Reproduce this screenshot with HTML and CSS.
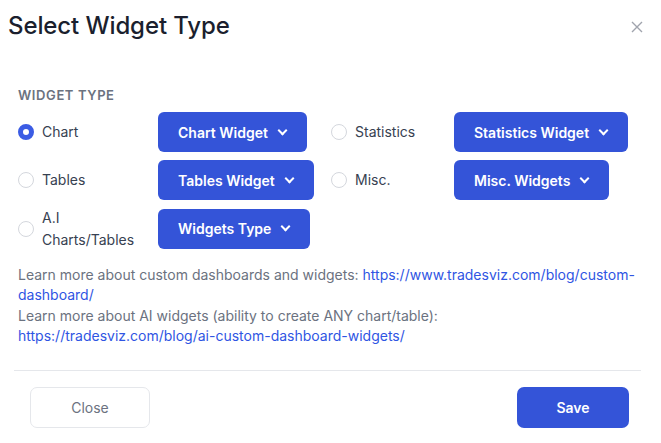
FILE: index.html
```html
<!DOCTYPE html>
<html lang="en">
<head>
  <meta charset="UTF-8" />
  <title>Select Widget Type</title>
  <link rel="stylesheet" href="styles.css">
</head>
<body>
  <div class="modal">
    <div class="modal-header">
      <h2 class="modal-title">Select Widget Type</h2>
      <button class="btn-x" aria-label="Close">
        <svg width="12" height="12" viewBox="0 0 12 12"><path d="M1 1L11 11M11 1L1 11" stroke="#a0a4ad" stroke-width="1.4" fill="none"/></svg>
      </button>
    </div>
    <div class="modal-body">
      <div class="section-label">Widget Type</div>
      <div class="type-grid">
        <label class="opt"><span class="radio checked"></span><span>Chart</span></label>
        <div class="cell"><button class="dd">Chart Widget <span class="chev"></span></button></div>
        <label class="opt"><span class="radio"></span><span>Statistics</span></label>
        <div class="cell"><button class="dd">Statistics Widget <span class="chev"></span></button></div>

        <label class="opt"><span class="radio"></span><span>Tables</span></label>
        <div class="cell"><button class="dd">Tables Widget <span class="chev"></span></button></div>
        <label class="opt"><span class="radio"></span><span>Misc.</span></label>
        <div class="cell"><button class="dd">Misc. Widgets <span class="chev"></span></button></div>

        <label class="opt"><span class="radio"></span><span>A.I Charts/Tables</span></label>
        <div class="cell"><button class="dd">Widgets Type <span class="chev"></span></button></div>
      </div>
      <p class="help">
        Learn more about custom dashboards and widgets: <a href="#">https://www.tradesviz.com/blog/custom-dashboard/</a><br>
        Learn more about AI widgets (ability to create ANY chart/table):<br>
        <a href="#">https://tradesviz.com/blog/ai-custom-dashboard-widgets/</a>
      </p>
    </div>
    <div class="modal-footer">
      <button class="btn btn-light">Close</button>
      <button class="btn btn-primary">Save</button>
    </div>
  </div>
</body>
</html>
```

FILE: styles.css
```css
* { margin: 0; padding: 0; box-sizing: border-box; }
body {
  font-family: Inter, "Noto Sans", sans-serif;
  background: #fff;
  color: #374151;
  width: 661px;
  height: 443px;
  overflow: hidden;
}
.modal {
  width: 661px;
}
.modal-header {
  display: flex;
  justify-content: space-between;
  align-items: center;
  padding: 8px 18px 0 8px;
}
.modal-title {
  font-size: 24px;
  font-weight: 500;
  line-height: 36px;
  color: #1b1f2e;
  letter-spacing: -0.1px;
}
.btn-x {
  background: none;
  border: none;
  display: flex;
  padding: 0;
  margin-top: 1px;
}
.modal-body {
  padding: 43px 18px 0 18px;
}
.section-label {
  font-size: 13px;
  font-weight: 600;
  line-height: 16px;
  color: #6b7280;
  text-transform: uppercase;
  letter-spacing: 0.6px;
}
.type-grid {
  display: grid;
  grid-template-columns: 140px 173px 123px auto;
  grid-auto-rows: 40px;
  row-gap: 8.4px;
  margin-top: 9px;
}
.opt {
  display: flex;
  align-items: center;
  gap: 8px;
  font-size: 14px;
  line-height: 22px;
  color: #374151;
  padding-right: 18px;
}
.radio {
  flex: none;
  width: 16px;
  height: 16px;
  border-radius: 50%;
  border: 1px solid #d4d7dd;
  background: #fff;
}
.radio.checked {
  border: 5px solid #3b5ce4;
}
.cell {
  display: flex;
}
.dd {
  display: flex;
  align-items: center;
  gap: 10px;
  height: 40px;
  padding: 0 20px;
  background: #3454d8;
  color: #fff;
  border: none;
  border-radius: 6px;
  font-family: Inter, "Noto Sans", sans-serif;
  font-size: 14px;
  font-weight: 600;
}
.chev {
  width: 7px;
  height: 7px;
  border-right: 2px solid #fff;
  border-bottom: 2px solid #fff;
  transform: rotate(45deg);
  margin: -4px 1px 0 1px;
}
.help {
  margin-top: 16px;
  font-size: 14px;
  line-height: 20.5px;
  color: #6b7280;
}
.help a {
  color: #2f55e3;
  text-decoration: none;
}
.modal-footer {
  display: flex;
  justify-content: space-between;
  margin: 23px 20px 0 14px;
  border-top: 1px solid #e5e7eb;
  padding: 16px 12px 0 16px;
}
.btn {
  height: 41px;
  border-radius: 7px;
  font-family: Inter, "Noto Sans", sans-serif;
  font-size: 14px;
}
.btn-light {
  width: 120px;
  background: #fff;
  border: 1px solid #e5e7eb;
  color: #6b7280;
}
.btn-primary {
  width: 112px;
  background: #3454d8;
  border: none;
  color: #fff;
  font-weight: 600;
}
```
